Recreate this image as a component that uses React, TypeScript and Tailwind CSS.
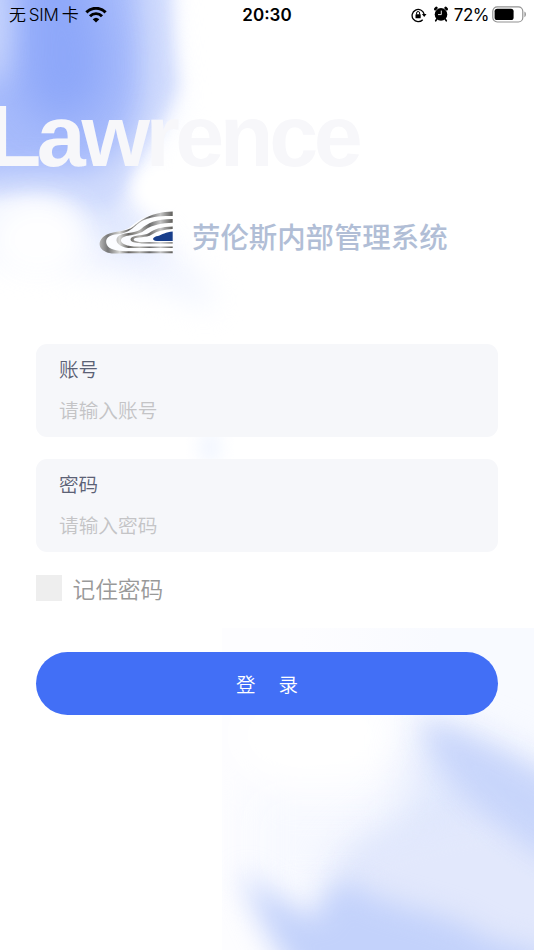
import React from "react";

function Backdrop() {
  return (
    <svg className="absolute inset-0 -z-10" width="534" height="950" viewBox="0 0 534 950" aria-hidden="true">
      <defs>
        <filter id="b8" x="-50%" y="-50%" width="200%" height="200%" colorInterpolationFilters="sRGB"><feGaussianBlur stdDeviation="8" /></filter>
        <filter id="b14" x="-60%" y="-60%" width="220%" height="220%" colorInterpolationFilters="sRGB"><feGaussianBlur stdDeviation="14" /></filter>
        <filter id="b22" x="-80%" y="-80%" width="260%" height="260%" colorInterpolationFilters="sRGB"><feGaussianBlur stdDeviation="22" /></filter>
        <clipPath id="corner"><rect x="222" y="628" width="312" height="322" /></clipPath>
        <linearGradient id="cornerTint" x1="300" y1="0" x2="440" y2="0" gradientUnits="userSpaceOnUse">
          <stop offset="0" stopColor="#fdfdff" /><stop offset="1" stopColor="#f8faff" />
        </linearGradient>
      </defs>
      <rect width="534" height="950" fill="#fff" />
      <path d="M-50 -60H168C176 0 174 60 180 110L140 165C125 180 135 215 170 245C205 275 218 300 212 312C150 280 80 270 -50 260Z" fill="#f3f6ff" filter="url(#b14)" />
      <path d="M60 160L120 180C125 215 150 235 165 255C120 262 70 240 60 160Z" fill="#dfe7fe" filter="url(#b14)" />
      <path d="M-50 -60H172C170 0 172 40 178 85C162 130 142 150 126 185C114 215 100 215 85 205C50 192 20 195 -50 200Z" fill="#d0dbfd" filter="url(#b8)" />
      <path d="M-50 -60H136C134 0 146 50 140 100C133 135 118 155 90 172C50 170 10 170 -50 175Z" fill="#a7bbfb" filter="url(#b14)" />
      <path d="M20 -60H75C95 10 120 50 100 105C70 135 30 125 22 95Z" fill="#89a4f9" opacity=".85" filter="url(#b22)" />
      <ellipse cx="-6" cy="20" rx="16" ry="65" fill="#dce5fe" opacity=".7" filter="url(#b14)" />
      <ellipse cx="38" cy="240" rx="46" ry="38" fill="#fff" opacity=".95" filter="url(#b14)" />
      <ellipse cx="160" cy="190" rx="24" ry="20" fill="#fff" filter="url(#b8)" />
      <ellipse cx="190" cy="170" rx="20" ry="28" fill="#fff" filter="url(#b14)" />
      <ellipse cx="210" cy="447" rx="12" ry="17" fill="#f3f7ff" filter="url(#b8)" />
      <g clipPath="url(#corner)">
        <rect x="222" y="628" width="312" height="322" fill="url(#cornerTint)" />
        <path d="M250 790H420V900H250Z" fill="#f7f9ff" filter="url(#b22)" />
        <ellipse cx="315" cy="735" rx="85" ry="50" fill="#fff" filter="url(#b22)" />
        <path d="M415 735C450 725 500 750 580 790V980H335C330 920 325 870 350 850C380 825 425 820 415 735Z" fill="#dfe7fd" filter="url(#b22)" />
        <path d="M350 860C380 840 440 820 570 800V980H340Z" fill="#e2e8fc" filter="url(#b14)" />
        <path d="M420 718C460 728 510 756 570 790V872C525 848 478 812 460 790C442 770 428 750 420 718Z" fill="#c6d4fb" opacity=".92" filter="url(#b14)" />
        <path d="M242 870C262 890 295 908 320 918C324 880 345 878 362 890C400 912 450 910 490 940L550 955V990H305C272 950 252 905 242 870Z" fill="#c3d2fb" filter="url(#b14)" />
      </g>
    </svg>
  );
}

function WifiIcon() {
  return (
    <svg className="ml-[6px]" width="22" height="16" viewBox="0 0 22 16" aria-hidden="true">
      <path d="M1.4 5.4A13.3 13.3 0 0 1 20.6 5.4" fill="none" stroke="#000" strokeWidth="3" />
      <path d="M5 9.2A8.3 8.3 0 0 1 17 9.2" fill="none" stroke="#000" strokeWidth="2.9" />
      <path d="M11 15.6L7.7 12.3A4.8 4.8 0 0 1 14.3 12.3Z" />
    </svg>
  );
}

function RotationLock() {
  return (
    <svg width="16" height="16" viewBox="0 0 16 16" aria-hidden="true">
      <path d="M11.7 12.7A6.1 6.1 0 1 1 13.1 7" fill="none" stroke="#000" strokeWidth="1.3" />
      <path d="M10.9 7H15.5L13.2 10Z" />
      <rect x="4.5" y="7.2" width="5.2" height="4" rx=".5" />
      <path d="M5.6 7.5V6A1.5 1.5 0 0 1 8.6 6V7.5" fill="none" stroke="#000" strokeWidth="1" />
    </svg>
  );
}

function AlarmIcon() {
  return (
    <svg width="14" height="16" viewBox="0 0 14 16" aria-hidden="true">
      <circle cx="7" cy="8.4" r="6.3" />
      <path d="M2.4 1.9L1.3 3.2M11.6 1.9L12.7 3.2" stroke="#000" strokeWidth="2.6" strokeLinecap="round" />
      <path d="M3.2 12.5L1.7 14.8M10.8 12.5L12.3 14.8" stroke="#000" strokeWidth="1.6" strokeLinecap="round" />
      <path d="M7.3 4.6V8.6H4" fill="none" stroke="#fff" strokeWidth=".9" />
    </svg>
  );
}

function Battery() {
  return (
    <svg className="ml-[3px]" width="36" height="17" viewBox="0 0 36 17" aria-hidden="true">
      <rect x=".8" y=".8" width="30" height="15.2" rx="4.5" fill="#fff" stroke="#929292" strokeWidth="1.2" />
      <rect x="2.6" y="2.7" width="19" height="11.4" rx="2.6" />
      <path d="M32.4 5.6C34.5 6.4 34.5 10.4 32.4 11.2Z" fill="#999" />
    </svg>
  );
}

function Logo() {
  return (
    <svg width="76" height="46" viewBox="98 210 76 46" aria-hidden="true">
      <defs>
        <linearGradient id="metal" x1="99" y1="0" x2="173" y2="0" gradientUnits="userSpaceOnUse">
          <stop offset="0" stopColor="#bbb" /><stop offset=".12" stopColor="#777" />
          <stop offset=".28" stopColor="#d8d8d6" /><stop offset=".4" stopColor="#686663" />
          <stop offset=".55" stopColor="#b5b4b1" /><stop offset=".68" stopColor="#6a6a6a" />
          <stop offset=".83" stopColor="#c5c5c5" /><stop offset="1" stopColor="#5b5a57" />
        </linearGradient>
      </defs>
      <path d="M173 212C148 212 137 221 129 228C116 234 100 232 100 243C100 252 115 253 125 253H173V214Z" fill="#fff" opacity=".85" />
      <g fill="url(#metal)">
        <path d="M172.7 211.5C151 212 141 220 134 226C126 233 111 230 103 237C97 243 99 250 108 252.7C113 254 119 253.4 125 253.2H172.7V251.2H126C116 251.2 109 249 107 245C104 239 109 235 117 234.3C132 233 135 224 144 220C153 216 163 216 172.7 216Z" />
        <path d="M172.7 219C155 219.3 148 223 141 229C134 234.5 122 231.5 117.5 237C114 242 120 247 128 248H172.7V246.4H134C124 246 118.5 242 122 238C126 234.5 138 236 145 230C153 224.5 162 223.3 172.7 222.8Z" />
        <path d="M172.7 226.5C161 226.8 155 229 149 233C144 236 134 234.5 131 238C128 243 140 243.4 145 243.6H172.7V242.3H148C140 242.2 132 241.5 134 238.7C137 236.5 146 238.2 152 234.5C158 230.5 165 229.5 172.7 229Z" />
      </g>
      <path d="M172.7 231.5C166 232 162 234.5 158 236C153 236.5 150.5 240.5 157 241H172.7Z" fill="#173d8b" />
    </svg>
  );
}

function Field({ label, placeholder, type }: { label: string; placeholder: string; type: string }) {
  return (
    <label className="flex h-[93px] flex-col rounded-[11px] bg-[#f6f7fa] px-[23px] pt-[11px]">
      <span className="h-7 text-[19.6px] font-[350] leading-7 text-[#5b6175]">{label}</span>
      <input
        type={type}
        placeholder={placeholder}
        className="mt-[13px] h-7 w-full bg-transparent p-0 text-[19.7px] font-[350] leading-7 outline-none placeholder:text-[#c4c4c6] placeholder:opacity-100"
      />
    </label>
  );
}

export default function App() {
  return (
    <div className="relative isolate flex h-[950px] w-[534px] flex-col overflow-hidden font-['Noto_Sans_CJK_SC',sans-serif]">
      <Backdrop />
      <header className="grid h-[30px] grid-cols-3 items-center font-[Inter,'Noto_Sans_CJK_SC',sans-serif] text-[17px] text-black">
        <div className="flex items-center pl-[9px] font-[350]">
          <span className="whitespace-nowrap pt-[2px] tracking-[-0.2px]">无<span className="mx-[3px]">SIM</span>卡</span>
          <WifiIcon />
        </div>
        <time className="pt-[2px] text-center text-[17px] font-semibold">20:30</time>
        <div className="flex items-center justify-end pr-[6px]">
          <span className="flex pb-px"><RotationLock /></span>
          <span className="ml-[7px] flex pb-[2px]"><AlarmIcon /></span>
          <span className="ml-[6px] pt-px tracking-[-0.5px]">72%</span>
          <span className="flex pb-px"><Battery /></span>
        </div>
      </header>
      <div className="mt-[58px] -ml-[12.5px] h-[96px] whitespace-nowrap font-['Liberation_Sans',sans-serif] text-[88px] font-bold leading-[96px] tracking-[-4.4px] text-[#f7f7fa]">
        Lawrence
      </div>
      <div className="mt-[26px] flex h-[46px] items-center pl-[98px]">
        <Logo />
        <h1 className="ml-[18px] whitespace-nowrap pt-[6px] text-[28.4px] font-medium leading-[46px] text-[#b1bed6]">劳伦斯内部管理系统</h1>
      </div>
      <form className="mt-[88px] flex flex-col px-9" onSubmit={(e) => e.preventDefault()}>
        <div className="flex flex-col gap-[22px]">
          <Field label="账号" placeholder="请输入账号" type="text" />
          <Field label="密码" placeholder="请输入密码" type="password" />
        </div>
        <label className="mt-[21px] flex h-[30px] items-center">
          <input type="checkbox" className="size-[25.5px] appearance-none bg-[#eee]" />
          <span className="ml-[11px] pt-[2px] text-[22.7px] font-[350] leading-[30px] text-[#999]">记住密码</span>
        </label>
        <button type="submit" className="mt-[49px] flex h-[63px] items-center justify-center gap-[23px] rounded-full bg-[#426ff6] text-[19.5px] font-[350] text-white">
          <span>登</span>
          <span>录</span>
        </button>
      </form>
    </div>
  );
}
